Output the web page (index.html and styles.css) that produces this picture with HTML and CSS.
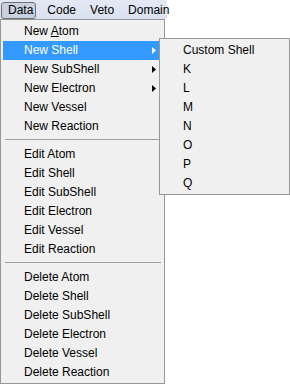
FILE: index.html
```html
<!DOCTYPE html>
<html>
<head>
<meta charset="utf-8">
<link rel="stylesheet" href="styles.css">
</head>
<body>
<div class="screen">
  <div class="menubar">
    <span class="mb-item active">Data</span>
    <span class="mb-item">Code</span>
    <span class="mb-item">Veto</span>
    <span class="mb-item">Domain</span>
  </div>
  <div class="menu main">
    <div class="item">New <u>A</u>tom</div>
    <div class="item hl sub">New Shell<svg class="arrow" width="4" height="7" viewBox="0 0 4 7"><polygon points="0,0 4,3.5 0,7"/></svg></div>
    <div class="item sub">New SubShell<svg class="arrow" width="4" height="7" viewBox="0 0 4 7"><polygon points="0,0 4,3.5 0,7"/></svg></div>
    <div class="item sub">New Electron<svg class="arrow" width="4" height="7" viewBox="0 0 4 7"><polygon points="0,0 4,3.5 0,7"/></svg></div>
    <div class="item">New Vessel</div>
    <div class="item">New Reaction</div>
    <div class="sep"></div>
    <div class="item">Edit Atom</div>
    <div class="item">Edit Shell</div>
    <div class="item">Edit SubShell</div>
    <div class="item">Edit Electron</div>
    <div class="item">Edit Vessel</div>
    <div class="item">Edit Reaction</div>
    <div class="sep"></div>
    <div class="item">Delete Atom</div>
    <div class="item">Delete Shell</div>
    <div class="item">Delete SubShell</div>
    <div class="item">Delete Electron</div>
    <div class="item">Delete Vessel</div>
    <div class="item">Delete Reaction</div>
  </div>
  <div class="menu submenu">
    <div class="item">Custom Shell</div>
    <div class="item">K</div>
    <div class="item">L</div>
    <div class="item">M</div>
    <div class="item">N</div>
    <div class="item">O</div>
    <div class="item">P</div>
    <div class="item">Q</div>
  </div>
</div>
</body>
</html>
```
FILE: styles.css
```css
html, body {
  margin: 0;
  padding: 0;
  background: #ffffff;
}
.screen {
  position: relative;
  width: 290px;
  height: 385px;
  overflow: hidden;
  font-family: "Liberation Sans", Arial, sans-serif;
  font-size: 12px;
  color: #000;
}
.menubar {
  display: flex;
  align-items: center;
  width: 167px;
  height: 19px;
  background: linear-gradient(#e3e9f4, #d9e1ee);
  box-sizing: border-box;
  padding-left: 1px;
}
.mb-item {
  padding: 0 6px;
  height: 17px;
  line-height: 15px;
  box-sizing: border-box;
  border: 1px solid transparent;
  margin-top: 1px;
}
.mb-item.active {
  border-color: #707070;
  border-radius: 3px;
  background: #c8d1e0;
  padding-right: 2px;
  margin-right: 4px;
}
.menu {
  background: #f0f0f0;
  border: 1px solid #979797;
  box-sizing: border-box;
  padding: 2px 3px 1px 2px;
}
.menu.main {
  width: 165px;
}
.submenu {
  position: absolute;
  left: 159px;
  top: 38px;
  width: 131px;
}
.item {
  position: relative;
  height: 19px;
  line-height: 19px;
  padding-left: 21px;
  white-space: nowrap;
}
.item.hl {
  background: #3399ff;
  color: #fff;
}
.arrow {
  position: absolute;
  right: 5px;
  top: 6px;
  fill: #000;
}
.item.hl .arrow {
  fill: #fff;
}
.sep {
  height: 9px;
  position: relative;
}
.sep::before {
  content: "";
  position: absolute;
  left: 2px;
  right: 0;
  top: 3px;
  height: 1px;
  background: #a0a0a0;
}
u {
  text-decoration: underline;
  text-underline-offset: 1px;
}
```
